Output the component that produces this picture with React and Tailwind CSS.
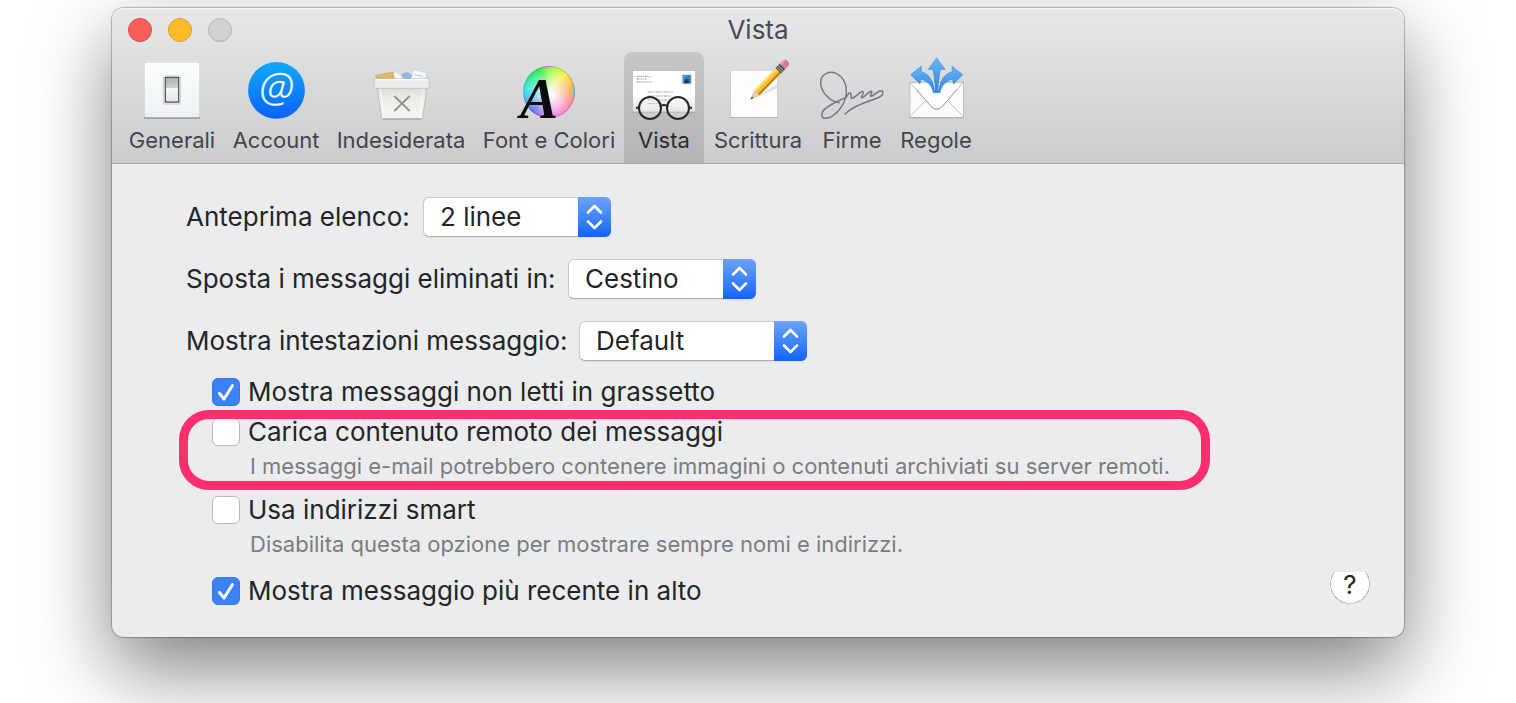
import React from "react";

const icon = "block size-16 shrink-0 overflow-visible";

function GeneraliIcon() {
  return (
    <svg viewBox="0 0 64 64" className={icon} aria-hidden="true">
      <defs>
        <linearGradient id="plate" x1="0" y1="0" x2="0" y2="1">
          <stop offset="0" stopColor="#fbfdfd" />
          <stop offset="1" stopColor="#eff2f4" />
        </linearGradient>
        <linearGradient id="rocker" x1="0" y1="0" x2="0" y2="1">
          <stop offset="0" stopColor="#a9abad" />
          <stop offset="0.42" stopColor="#cfd1d2" />
          <stop offset="0.44" stopColor="#f5f6f7" />
          <stop offset="1" stopColor="#e0e2e3" />
        </linearGradient>
      </defs>
      <rect x="4" y="5" width="56" height="55.5" rx="1" fill="#707274" />
      <rect x="4" y="4" width="56" height="55.5" rx="1" fill="#c9cbcd" />
      <rect x="4.6" y="4.4" width="54.8" height="54.8" rx="1" fill="url(#plate)" />
      <rect x="22.8" y="17.5" width="18.2" height="29" rx="1.5" fill="#c4c7c9" />
      <rect x="23.6" y="17.9" width="16.6" height="27.6" rx="1" fill="#f6f8f8" />
      <rect x="25.3" y="19.3" width="13.4" height="24.8" fill="url(#rocker)" stroke="#4a4c4e" strokeWidth="1.2" />
    </svg>
  );
}

function AccountIcon() {
  return (
    <svg viewBox="0 0 64 64" className={icon} aria-hidden="true">
      <defs>
        <linearGradient id="at" x1="0" y1="0" x2="0" y2="1">
          <stop offset="0" stopColor="#10aaf8" />
          <stop offset="1" stopColor="#0a62fb" />
        </linearGradient>
      </defs>
      <circle cx="32.5" cy="32.4" r="28.4" fill="url(#at)" />
      <text
        x="32.5"
        y="43.5"
        textAnchor="middle"
        fontFamily="'Open Sans', sans-serif"
        fontStyle="italic"
        fontWeight="300"
        fontSize="41"
        fill="#f4fbff"
        stroke="#f4fbff"
        strokeWidth="0.3"
      >
        @
      </text>
    </svg>
  );
}

function IndesiderataIcon() {
  return (
    <svg viewBox="56 24 192 192" className={icon} aria-hidden="true">
      <defs>
        <linearGradient id="bin" x1="0" y1="0" x2="0" y2="1">
          <stop offset="0" stopColor="#dcdcda" />
          <stop offset="0.3" stopColor="#ebebe6" />
          <stop offset="1" stopColor="#f6f6f6" />
        </linearGradient>
      </defs>
      <path d="M77 88 76 76l52-11 6 23z" fill="#e0b563" stroke="#c99d4c" strokeWidth="1" />
      <path d="m134 88-4-18 10-4 18 22z" fill="#fbfcfd" stroke="#cfd5da" strokeWidth="1" />
      <path d="m160 88-6-15 14-6 20 10 4 11z" fill="#8fb8de" stroke="#709dc6" strokeWidth="1" />
      <path d="m182 88 8-28 38 8-2 20z" fill="#f8fbfd" stroke="#c2cfda" strokeWidth="1.5" />
      <path d="m192 74 26 5" stroke="#b9d4ea" strokeWidth="4" />
      <path d="M80 112h150l-14 97H95z" fill="url(#bin)" stroke="#aaacad" strokeWidth="2" />
      <path d="m98 207 115-.5" stroke="#8f9192" strokeWidth="3" />
      <path d="m90 116 11 86M219 116l-11 86" stroke="#fff" strokeWidth="4" opacity=".55" />
      <rect x="71" y="86" width="166" height="29" rx="5" fill="#ececea" stroke="#b5b7b8" strokeWidth="2" />
      <path d="M75 89h158" stroke="#fff" strokeWidth="4" />
      <path d="m132 138 46 45m0-45-46 45" stroke="#96978f" strokeWidth="6" fill="none" />
    </svg>
  );
}

function FontIcon() {
  return (
    <span className="relative grid size-16 shrink-0 place-items-center pt-1" aria-hidden="true">
      <span className="size-[52px] rounded-full border border-black/15 bg-[radial-gradient(circle_at_54%_56%,#ffffff_4%,#ffffff99_32%,#ffffff00_72%),conic-gradient(from_0deg,#8dff3c,#f2ef3a_40deg,#f9903a_85deg,#fb6f66_110deg,#ff5fd0_150deg,#d060f0_185deg,#4a5ce8_220deg,#35b4f5_250deg,#2de8dc_280deg,#2ce88a_310deg,#3fe64a_340deg,#8dff3c)]" />
      <svg viewBox="0 0 64 64" className="absolute inset-0 size-16 overflow-visible">
        <text
          x="22"
          y="60"
          textAnchor="middle"
          fontFamily="'Liberation Serif', serif"
          fontStyle="italic"
          fontWeight="700"
          fontSize="57"
          fill="#0b0b0c"
        >
          A
        </text>
      </svg>
    </span>
  );
}

function VistaIcon() {
  return (
    <svg viewBox="66 144 192 192" className={icon} aria-hidden="true">
      <defs>
        <linearGradient id="letter" x1="0" y1="0" x2="0" y2="1">
          <stop offset="0.6" stopColor="#ffffff" />
          <stop offset="1" stopColor="#dfe0e1" />
        </linearGradient>
        <linearGradient id="stamp" x1="0" y1="0" x2="1" y2="1">
          <stop offset="0" stopColor="#4aa6e0" />
          <stop offset="1" stopColor="#23527f" />
        </linearGradient>
      </defs>
      <rect x="69" y="184" width="186" height="124" fill="#a5a6a7" />
      <rect x="69" y="183" width="186" height="122" fill="url(#letter)" />
      <g stroke="#a2a4a6" strokeWidth="3" strokeDasharray="9 2 6 1.5 4 2">
        <path d="M80 199h44M80 207h30M80 216h46" />
        <path d="M113 246h76M113 258h70M113 270h60M113 281h44" />
      </g>
      <rect x="214" y="191" width="32" height="33" fill="#d5e9f6" />
      <rect x="218" y="195" width="24" height="25" fill="url(#stamp)" />
      <path d="m222 220 5-15 6 4 4 11z" fill="#1d3c5d" />
      <g fill="none" stroke="#252627" strokeWidth="6">
        <circle cx="120" cy="294" r="33" fill="#fff" fillOpacity=".25" />
        <circle cx="204" cy="294" r="33" fill="#fff" fillOpacity=".25" />
        <path d="M151 291c3-8 19-8 22 0M78 293h9M237 293h9" />
      </g>
    </svg>
  );
}

function ScritturaIcon() {
  return (
    <svg viewBox="348 144 192 192" className={icon} aria-hidden="true">
      <rect x="360" y="182" width="143" height="142" fill="#b1b3b5" />
      <rect x="362" y="182" width="140" height="139" fill="#fdfdfd" />
      <path d="m426 268 76-47v14z" fill="#e3e4e5" />
      <g transform="translate(422 268) rotate(-46) scale(.97 .9)">
        <path d="M0 0 30-11V11z" fill="#ecd2a2" stroke="#a98d5d" strokeWidth="1" />
        <path d="M0 0 9-3.5V3.5z" fill="#303030" />
        <rect x="28" y="-12" width="97" height="24" fill="#f5bf2d" />
        <rect x="28" y="-12" width="97" height="7" fill="#ffdc68" />
        <rect x="28" y="5" width="97" height="7" fill="#bf7f19" />
        <rect x="123" y="-13" width="19" height="26" fill="#55585b" />
        <path d="M128-13v26M134-13v26" stroke="#b9bcc0" strokeWidth="2.5" />
        <path d="M142-13h13q10 2 10 13t-10 13h-13z" fill="#cf7f94" />
        <path d="M142-12h14l6 5h-20z" fill="#efb0be" />
      </g>
    </svg>
  );
}

function FirmeIcon() {
  return (
    <svg viewBox="60 54 192 192" className={icon} aria-hidden="true">
      <path
        d="M118 188C88 184 60 154 62 124c2-22 26-32 46-24 24 10 34 38 30 66-4 30-34 68-62 69-14 0-14-18 0-29 20-16 44-25 62-34 5-6 6-14 12-14 8 2-2 18 6 17 14-3 24-24 33-20 6 4-10 18-3 18 10-2 20-20 28-19 6 2-8 16-1 15 10-3 20-16 30-17 9 0 8 13-4 19-28 14-74 20-104 51"
        fill="none"
        stroke="#77797c"
        strokeWidth="4.4"
        strokeLinecap="round"
        strokeLinejoin="round"
      />
    </svg>
  );
}

function RegoleIcon() {
  return (
    <svg viewBox="312 54 192 192" className={icon} aria-hidden="true">
      <defs>
        <linearGradient id="arrows" x1="0" y1="0" x2="0" y2="1">
          <stop offset="0" stopColor="#66b6fb" />
          <stop offset="1" stopColor="#2c86e6" />
        </linearGradient>
      </defs>
      <rect x="329" y="125" width="162" height="110" fill="#aeb0b2" />
      <rect x="331" y="126" width="158" height="105" fill="#fbfbfb" />
      <path d="m331 229 47-48M489 229l-47-48" stroke="#c0c2c4" strokeWidth="3" />
      <path d="m331 128 62 71q17 17 34 0l62-71z" fill="#ffffff" stroke="#c0c2c4" strokeWidth="3" />
      <path d="m350 149 43 50q17 17 34 0l43-50" fill="none" stroke="#a2a4a6" strokeWidth="3" />
      <g fill="url(#arrows)" stroke="#3a7fc4" strokeWidth="1.8" strokeLinejoin="round">
        <path d="M405 158c1-20-1-46-6-70h-14l25-34 25 34h-14c-5 24-7 50-6 70z" />
        <path d="M400 158c-4-20-15-34-38-41l-2 15-28-28 32-25-1 16c24 6 38 26 41 63z" />
        <path d="M420 158c4-20 15-34 38-41l2 15 28-28-32-25 1 16c-24 6-38 26-41 63z" />
      </g>
    </svg>
  );
}

const tabs = [
  { label: "Generali", Icon: GeneraliIcon, width: "w-[104px]" },
  { label: "Account", Icon: AccountIcon, width: "w-[104px]" },
  { label: "Indesiderata", Icon: IndesiderataIcon, width: "w-[146px]" },
  { label: "Font e Colori", Icon: FontIcon, width: "w-[150px]" },
  { label: "Vista", Icon: VistaIcon, width: "w-[80px]", active: true },
  { label: "Scrittura", Icon: ScritturaIcon, width: "w-[108px]" },
  { label: "Firme", Icon: FirmeIcon, width: "w-[80px]" },
  { label: "Regole", Icon: RegoleIcon, width: "w-[88px]" },
];

const choices = [
  { id: "anteprima", label: "Anteprima elenco:", labelWidth: "w-[237px]", value: "2 linee", width: "w-[188px]" },
  { id: "sposta", label: "Sposta i messaggi eliminati in:", labelWidth: "w-[382px]", value: "Cestino", width: "w-[188px]" },
  { id: "intestazioni", label: "Mostra intestazioni messaggio:", labelWidth: "w-[393px]", value: "Default", width: "w-[228px]" },
];

function Choice({ id, label, labelWidth, value, width }) {
  return (
    <div className="flex h-10 items-center">
      <label htmlFor={id} className={`shrink-0 whitespace-nowrap ${labelWidth}`}>
        {label}
      </label>
      <div className={`relative h-10 shrink-0 ${width}`}>
        <select
          id={id}
          defaultValue={value}
          className="size-full appearance-none rounded-md border border-[#c8c9cb] border-b-[#adaeb0] bg-white pr-9 pl-4 shadow-xs"
        >
          <option>{value}</option>
        </select>
        <span className="pointer-events-none absolute inset-y-0 right-0 grid w-[33px] place-items-center rounded-r-md bg-linear-to-b from-[#6aa3f8] to-[#0d63fa]">
          <svg viewBox="0 0 33 40" className="h-10 w-[33px]" aria-hidden="true">
            <path
              d="m10 15.5 6.5-6.5 6.5 6.5M10 24.5l6.500 6.500 6.500-6.500"
              fill="none"
              stroke="#fff"
              strokeWidth="2.6"
              strokeLinecap="round"
              strokeLinejoin="round"
            />
          </svg>
        </span>
      </div>
    </div>
  );
}

function Option({ label, checked, describedBy }) {
  return (
    <label className="flex h-7 w-max items-center gap-2">
      <span className="relative block size-7">
        <input
          type="checkbox"
          defaultChecked={checked}
          aria-describedby={describedBy}
          className="peer block size-7 appearance-none rounded-md border border-[#b9babc] bg-white checked:border-[#3478f0] checked:bg-[#3b82f7]"
        />
        <svg
          viewBox="0 0 28 28"
          className="pointer-events-none absolute inset-0 hidden size-7 peer-checked:block"
          aria-hidden="true"
        >
          <path
            d="m7.5 15.5 4.5 5.5 8.5-13.5"
            fill="none"
            stroke="#fff"
            strokeWidth="3"
            strokeLinecap="round"
            strokeLinejoin="round"
          />
        </svg>
      </span>
      {label}
    </label>
  );
}

export default function App() {
  return (
    <div className="min-h-screen overflow-hidden bg-white px-28 pt-2 pb-16 font-['Inter','Liberation_Sans',sans-serif] text-[26px] leading-7 text-[#242527]">
      <main className="rounded-xl bg-[#ebeced] shadow-[0_0_1px_1px_rgba(0,0,0,0.25),0_32px_80px_rgba(0,0,0,0.5)]">
        <header className="rounded-t-xl border-b border-[#a9aaac] bg-linear-to-b from-[#e7e8e9] to-[#cbccce] shadow-[inset_0_1px_0_#f6f7f7]">
          <div className="grid h-11 grid-cols-[1fr_auto_1fr] items-center px-4">
            <div className="flex gap-4">
              <button aria-label="Chiudi" className="size-6 rounded-full border border-[#dc4a45] bg-[#fc5f5a]" />
              <button aria-label="Riduci" className="size-6 rounded-full border border-[#e0a02a] bg-[#fdbc2e]" />
              <button aria-label="Ingrandisci" disabled className="size-6 rounded-full border border-[#b4b5b7] bg-[#cfd0d2]" />
            </div>
            <h1 className="text-[#4b4c4f]">Vista</h1>
          </div>
          <nav className="flex pl-2 text-[22px] leading-[26px] text-[#454649]">
            {tabs.map(({ label, Icon, width, active }) => (
              <button
                key={label}
                aria-pressed={!!active}
                className={`flex shrink-0 flex-col items-center gap-[5px] rounded-t-lg pt-[6px] pb-[10px] whitespace-nowrap ${width} ${
                  active ? "bg-linear-to-b from-[#c5c6c8] to-[#b4b5b7] text-[#2c2d2f]" : ""
                }`}
              >
                <Icon />
                {label}
              </button>
            ))}
          </nav>
        </header>

        <form className="pt-[33px] pb-[27px] pl-[74px]">
          <div className="flex flex-col gap-[22px]">
            {choices.map((c) => (
              <Choice key={c.id} {...c} />
            ))}
          </div>

          <div className="mt-[17px] flex flex-col gap-3 pl-[26px]">
            <Option label="Mostra messaggi non letti in grassetto" checked />

            <div className="relative w-max pb-[3px]">
              <Option label="Carica contenuto remoto dei messaggi" describedBy="remoto" />
              <p id="remoto" className="mt-[5px] pl-[38px] text-[22px] leading-[30px] text-[#7c7d7f]">
                I messaggi e-mail potrebbero contenere immagini o contenuti archiviati su server remoti.
              </p>
              <div className="pointer-events-none absolute -top-2 -right-10 -bottom-[6px] -left-[33px] rounded-[30px] border-[9px] border-[#ff2f6e]" />
            </div>

            <div className="pb-px">
              <Option label="Usa indirizzi smart" describedBy="smart" />
              <p id="smart" className="mt-[5px] pl-[38px] text-[22px] leading-[30px] text-[#7c7d7f]">
                Disabilita questa opzione per mostrare sempre nomi e indirizzi.
              </p>
            </div>

            <div className="flex h-[38px] items-center justify-between pr-[34px]">
              <Option label="Mostra messaggio più recente in alto" checked />
              <button
                type="button"
                aria-label="Aiuto"
                className="h-8 w-10 self-start bg-[radial-gradient(circle_at_20px_12px,#ffffff_19px,#bfc0c2_19px,#c8c9cb_20px,#ebeced00_20px)] pb-[6px] leading-[26px]"
              >
                ?
              </button>
            </div>
          </div>
        </form>
      </main>
    </div>
  );
}
